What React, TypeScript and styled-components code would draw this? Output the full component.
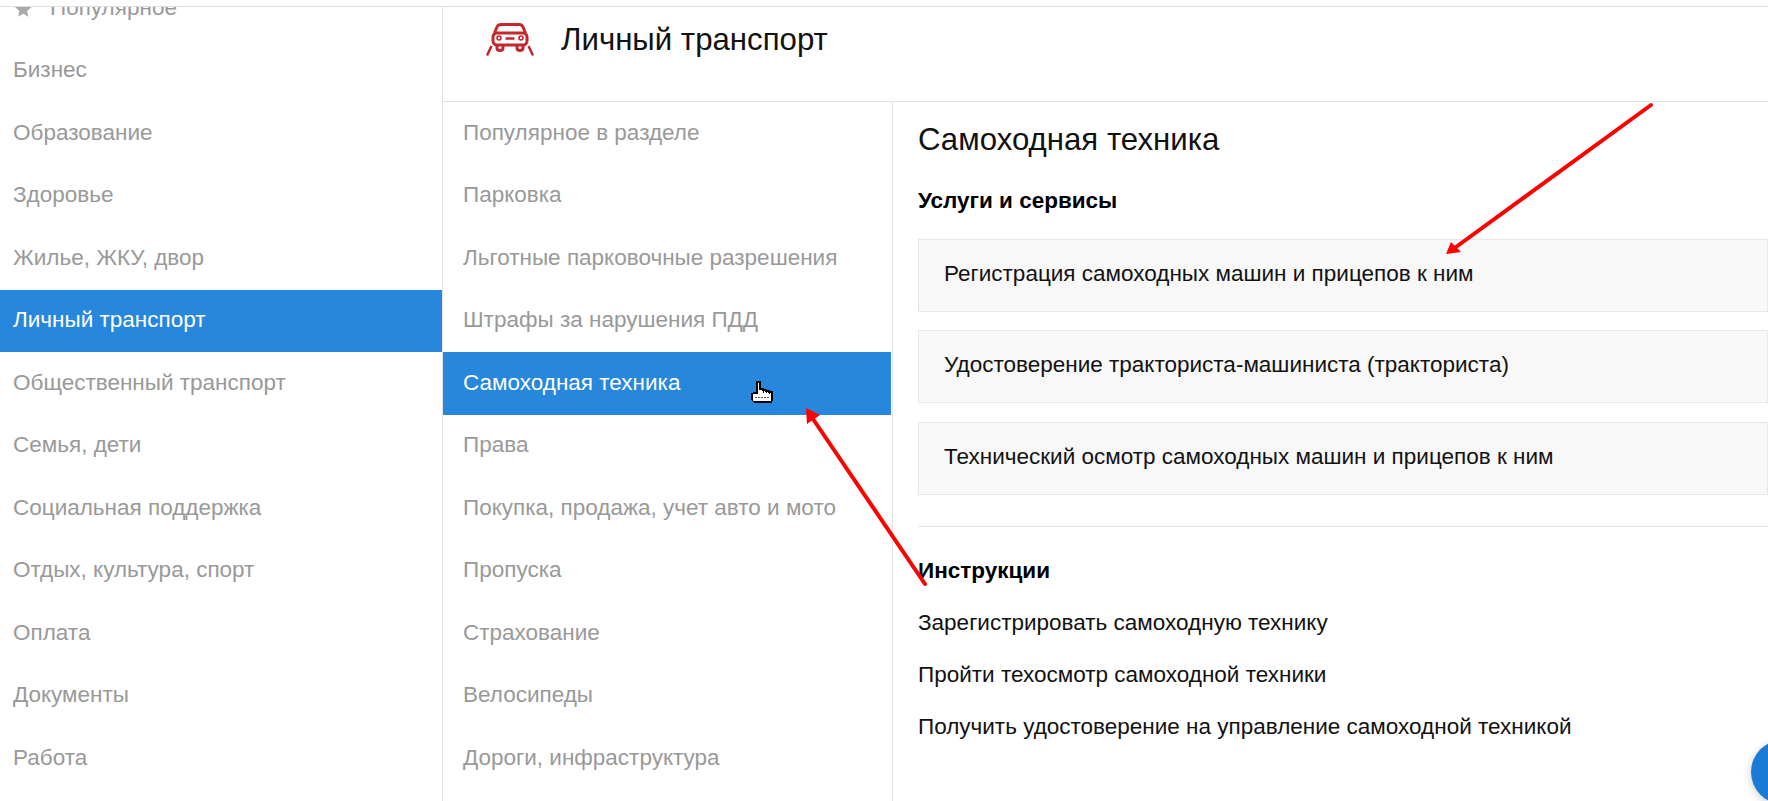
import React from "react";
import styled, { createGlobalStyle } from "styled-components";

const Global = createGlobalStyle`
  html, body { margin: 0; padding: 0; background: #fff; overflow: hidden; }
  body { font-family: "Liberation Sans", Arial, sans-serif; }
  * { box-sizing: border-box; }
`;

const Page = styled.div`
  position: relative;
  display: flex;
  width: 1768px;
  height: 801px;
  overflow: hidden;
  background: #fff;
`;

const TopBar = styled.div`
  position: absolute;
  top: 0;
  left: 0;
  right: 0;
  height: 7px;
  background: #fff;
  border-bottom: 1px solid #dedede;
  z-index: 2;
`;

const Sidebar = styled.nav`
  flex: 0 0 443px;
  margin-top: -23px;
  border-right: 1px solid #e3e3e3;
`;

const MenuRow = styled.div<{ $active?: boolean }>`
  display: flex;
  align-items: center;
  gap: 18.5px;
  height: 62.5px;
  padding: 0 13px 1.5px;
  font-size: 22.5px;
  color: ${(p) => (p.$active ? "#fff" : "#999")};
  background: ${(p) => (p.$active ? "#2787dc" : "transparent")};
  white-space: nowrap;
`;

const Main = styled.main`
  flex: 1;
  min-width: 0;
  display: flex;
  flex-direction: column;
  padding-top: 7px;
`;

const Header = styled.header`
  display: flex;
  align-items: center;
  gap: 26px;
  height: 95px;
  padding: 0 0 28px 42px;
  border-bottom: 1px solid #e3e3e3;
`;

const HeaderTitle = styled.h1`
  margin: 0;
  font-size: 31.2px;
  font-weight: 400;
  color: #111;
`;

const Columns = styled.div`
  flex: 1;
  display: flex;
  min-height: 0;
`;

const SubMenu = styled.div`
  flex: 0 0 450px;
  border-right: 1px solid #e3e3e3;
  padding-right: 1px;
`;

const SubRow = styled(MenuRow)`
  padding: 0 20px 1.5px;
`;

const Content = styled.section`
  flex: 1;
  min-width: 0;
  padding: 21px 0 0 25px;
`;

const ContentTitle = styled.h2`
  margin: 0 0 31px;
  font-size: 31.2px;
  line-height: 34px;
  font-weight: 400;
  color: #111;
`;

const SectionLabel = styled.h3`
  margin: 0;
  font-size: 22.5px;
  line-height: 26px;
  font-weight: 700;
  color: #000;
`;

const CardList = styled.div`
  display: flex;
  flex-direction: column;
  gap: 18.5px;
  margin-top: 24.5px;
  padding-bottom: 31.5px;
  border-bottom: 1px solid #e3e3e3;
`;

const Card = styled.div`
  display: flex;
  align-items: center;
  height: 73px;
  padding: 0 0 3px 25px;
  background: #f8f8f8;
  border: 1px solid #e8e8e8;
  font-size: 22.5px;
  color: #111;
`;

const Instructions = styled.div`
  margin-top: 31px;
  display: flex;
  flex-direction: column;
`;

const LinkRow = styled.div`
  font-size: 22.5px;
  line-height: 26px;
  margin-top: 26px;
  color: #111;
`;

const Fab = styled.div`
  position: absolute;
  left: 1751px;
  top: 740px;
  width: 64px;
  height: 64px;
  border-radius: 50%;
  background: #1a7bd6;
  box-shadow: 0 2px 10px rgba(0, 0, 0, 0.2);
`;

const Overlay = styled.svg`
  position: absolute;
  inset: 0;
  width: 1768px;
  height: 801px;
  pointer-events: none;
  z-index: 3;
`;

const Cursor = styled.svg`
  position: absolute;
  left: 751px;
  top: 381px;
  width: 22px;
  height: 22px;
  z-index: 3;
`;

const Star = styled.svg`
  flex: none;
  width: 16.5px;
  height: 16.5px;
  margin: 3px 0 0 2px;
`;

const StarIcon = () => (
  <Star viewBox="0 0 18 18" aria-hidden>
    <polygon fill="#aaa" points="9,0 11.7,6 18,6.6 13.2,10.8 14.6,17.2 9,13.8 3.4,17.2 4.8,10.8 0,6.6 6.3,6" />
  </Star>
);

const CarIcon = () => (
  <svg width="50" height="34" viewBox="0 0 50 34" fill="none" stroke="#c3282d" aria-hidden>
    <path strokeWidth="3" d="M9.5 10 L12 4 Q13 1.500 16 1.500 H34 Q37 1.500 38 4 L40.500 10" />
    <rect strokeWidth="3" x="8" y="10" width="34" height="12" rx="4" />
    <circle strokeWidth="1.600" cx="14" cy="15" r="2" />
    <circle strokeWidth="1.600" cx="36" cy="15" r="2" />
    <path strokeWidth="2.500" d="M20.500 15.500h9" />
    <path strokeWidth="3" d="M12 22v3q0 2.500 3 2.500t3-2.500v-3M32 22v3q0 2.500 3 2.500t3-2.500v-3" />
    <path strokeWidth="2.500" d="M6.500 23 L2 32.500M43.500 23 L48 32.500" />
  </svg>
);

const sidebarItems = [
  "Популярное", "Бизнес", "Образование", "Здоровье", "Жилье, ЖКУ, двор", "Личный транспорт",
  "Общественный транспорт", "Семья, дети", "Социальная поддержка", "Отдых, культура, спорт",
  "Оплата", "Документы", "Работа",
];

const subItems = [
  "Популярное в разделе", "Парковка", "Льготные парковочные разрешения", "Штрафы за нарушения ПДД",
  "Самоходная техника", "Права", "Покупка, продажа, учет авто и мото", "Пропуска", "Страхование",
  "Велосипеды", "Дороги, инфраструктура",
];

const cards = [
  "Регистрация самоходных машин и прицепов к ним",
  "Удостоверение тракториста-машиниста (тракториста)",
  "Технический осмотр самоходных машин и прицепов к ним",
];

const links = [
  "Зарегистрировать самоходную технику",
  "Пройти техосмотр самоходной техники",
  "Получить удостоверение на управление самоходной техникой",
];

export default function App() {
  return (
    <Page>
      <Global />
      <TopBar />
      <Sidebar>
        {sidebarItems.map((t, i) => (
          <MenuRow key={t} $active={t === "Личный транспорт"}>
            {i === 0 && <StarIcon />}
            {t}
          </MenuRow>
        ))}
      </Sidebar>
      <Main>
        <Header>
          <CarIcon />
          <HeaderTitle>Личный транспорт</HeaderTitle>
        </Header>
        <Columns>
          <SubMenu>
            {subItems.map((t) => (
              <SubRow key={t} $active={t === "Самоходная техника"}>{t}</SubRow>
            ))}
          </SubMenu>
          <Content>
            <ContentTitle>Самоходная техника</ContentTitle>
            <SectionLabel>Услуги и сервисы</SectionLabel>
            <CardList>
              {cards.map((c) => <Card key={c}>{c}</Card>)}
            </CardList>
            <Instructions>
              <SectionLabel>Инструкции</SectionLabel>
              {links.map((l) => <LinkRow key={l}>{l}</LinkRow>)}
            </Instructions>
          </Content>
        </Columns>
      </Main>
      <Fab />
      <Overlay viewBox="0 0 1768 801">
        <g stroke="#f00" strokeWidth="4" strokeLinecap="round" fill="none">
          <path d="M1651 105 L1456 247" />
          <path d="M925 584 L813 419" />
        </g>
        <polygon fill="#f00" points="1446,254 1451,242 1461,252" />
        <polygon fill="#f00" points="806,408 807,424 820,415" />
      </Overlay>
      <Cursor viewBox="0 0 22 22" shapeRendering="crispEdges">
        <path
          fill="#fff"
          stroke="#000"
          strokeWidth="1.400"
          d="M6 1h3v7h3v1h3v1h3v1h3v8l-1 2H3l-2-2v-6l2-1h3z"
        />
        <path stroke="#555" strokeWidth="1" strokeDasharray="2 1" d="M4 16h14" fill="none" />
        <path stroke="#000" strokeWidth="1" d="M12 9v3M15 10v2M18 11v2" fill="none" />
      </Cursor>
    </Page>
  );
}
